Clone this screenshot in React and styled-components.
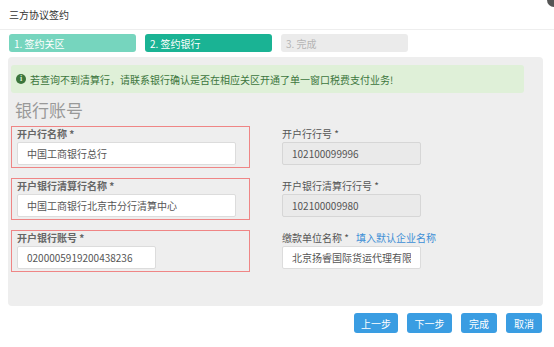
import React, { useState } from 'react';
import styled, { createGlobalStyle } from 'styled-components';

const GlobalStyle = createGlobalStyle`
  html, body {
    margin: 0;
    padding: 0;
    background: #fff;
  }
  body {
    font-family: 'Noto Sans CJK SC', 'Liberation Sans', sans-serif;
    font-size: 10px;
    color: #555;
  }
`;

const steps = [
  { text: '1. 签约关区', state: 'done' },
  { text: '2. 签约银行', state: 'active' },
  { text: '3. 完成', state: 'todo' },
];

const leftFields = [
  { label: '开户行名称', value: '中国工商银行总行', width: 219 },
  { label: '开户银行清算行名称', value: '中国工商银行北京市分行清算中心', width: 219 },
  { label: '开户银行账号', value: '0200005919200438236', width: 139 },
];

const rightFields = [
  { label: '开户行行号', value: '102100099996', disabled: true },
  { label: '开户银行清算行行号', value: '102100009980', disabled: true },
  { label: '缴款单位名称', value: '北京扬睿国际货运代理有限公司', link: '填入默认企业名称' },
];

export default function App() {
  const [values, setValues] = useState({});

  const setField = (key, v) => setValues((prev) => ({ ...prev, [key]: v }));

  return (
    <>
      <GlobalStyle />
      <Dialog>
        <Header>
          <Title>三方协议签约</Title>
          <Close />
        </Header>
        <Steps>
          {steps.map((s) => (
            <Step key={s.text} state={s.state}>{s.text}</Step>
          ))}
        </Steps>
        <Panel>
          <Alert>
            <InfoIcon>i</InfoIcon>
            若查询不到清算行，请联系银行确认是否在相应关区开通了单一窗口税费支付业务!
          </Alert>
          <Heading>银行账号</Heading>
          <FormGrid>
            {leftFields.map((f, i) => (
              <React.Fragment key={f.label}>
                <FieldBox $marked>
                  <Label $strong>{f.label} *</Label>
                  <Input
                    $width={f.width}
                    value={values['l' + i] ?? f.value}
                    onChange={(e) => setField('l' + i, e.target.value)}
                  />
                </FieldBox>
                <FieldBox>
                  <Label>
                    {rightFields[i].label} *
                    {rightFields[i].link && <FillLink>{rightFields[i].link}</FillLink>}
                  </Label>
                  <Input
                    $width={139}
                    disabled={rightFields[i].disabled}
                    value={values['r' + i] ?? rightFields[i].value}
                    onChange={(e) => setField('r' + i, e.target.value)}
                  />
                </FieldBox>
              </React.Fragment>
            ))}
          </FormGrid>
        </Panel>
        <Footer>
          <Button $w={44}>上一步</Button>
          <Button $w={45}>下一步</Button>
          <Button $w={36}>完成</Button>
          <Button $w={36}>取消</Button>
        </Footer>
      </Dialog>
    </>
  );
}

const Dialog = styled.div`
  position: relative;
  width: 554px;
  height: 347px;
  overflow: hidden;
`;

const Header = styled.div`
  height: 30px;
  display: flex;
  align-items: center;
  padding-left: 9px;
  border-bottom: 1px solid #eeeeee;
  box-sizing: border-box;
`;

const Title = styled.div`
  font-size: 10px;
  color: #333;
`;

const Close = styled.div`
  position: absolute;
  top: -7px;
  right: -7px;
  width: 14px;
  height: 14px;
  border-radius: 50%;
  background: #555;
`;

const Steps = styled.div`
  display: flex;
  gap: 9px;
  padding: 4px 0 0 9px;
`;

const stepColors = {
  done: { bg: '#76d5be', fg: '#fff' },
  active: { bg: '#1ab394', fg: '#fff' },
  todo: { bg: '#ebebeb', fg: '#b5b5b5' },
};

const Step = styled.div`
  width: 127px;
  height: 18px;
  box-sizing: border-box;
  display: flex;
  align-items: center;
  padding-left: 5px;
  border-radius: 3px;
  font-size: 10px;
  background: ${(p) => stepColors[p.state].bg};
  color: ${(p) => stepColors[p.state].fg};
`;

const Panel = styled.div`
  margin: 5px 11px 0 8px;
  height: 249px;
  box-sizing: border-box;
  padding: 8px 19px 0 3px;
  background: #eeeeee;
  border-radius: 4px;
`;

const Alert = styled.div`
  height: 28px;
  display: flex;
  align-items: center;
  padding-left: 5px;
  gap: 4px;
  background: #dff0d8;
  color: #3c763d;
  border-radius: 3px;
  font-size: 10px;
`;

const InfoIcon = styled.span`
  width: 10px;
  height: 10px;
  border-radius: 50%;
  background: #3c763d;
  color: #dff0d8;
  font-size: 8px;
  font-weight: 700;
  font-family: 'Liberation Serif', serif;
  display: flex;
  align-items: center;
  justify-content: center;
  line-height: 1;
`;

const Heading = styled.div`
  font-size: 17px;
  color: #999;
  line-height: 24px;
  height: 24px;
  padding: 5px 0 0 4px;
  margin-bottom: 4px;
`;

const FormGrid = styled.div`
  display: grid;
  grid-template-columns: 239px 1fr;
  column-gap: 31px;
  row-gap: 10px;
`;

const FieldBox = styled.div`
  height: 42px;
  box-sizing: border-box;
  border: 1px solid ${(p) => (p.$marked ? '#ef8585' : 'transparent')};
  padding: 0 0 2px ${(p) => (p.$marked ? '5px' : '0')};
  display: flex;
  flex-direction: column;
  justify-content: flex-end;
`;

const Label = styled.div`
  font-size: 10px;
  font-weight: ${(p) => (p.$strong ? 700 : 400)};
  color: ${(p) => (p.$strong ? '#666' : '#555')};
  line-height: 13px;
  margin-bottom: 2px;
  display: flex;
  gap: 7px;
`;

const FillLink = styled.a`
  color: #3d8fd6;
  font-weight: 400;
  cursor: pointer;
`;

const Input = styled.input`
  width: ${(p) => p.$width}px;
  height: 23px;
  box-sizing: border-box;
  border: 1px solid #dcdcdc;
  border-radius: 2px;
  padding: 0 9px;
  font-family: 'Noto Sans CJK SC', 'Liberation Sans', sans-serif;
  font-size: 10px;
  color: #555;
  background: #fff;
  outline: none;

  &:disabled {
    background: #eaeaea;
    border-color: #d6d6d6;
    color: #555;
  }
`;

const Footer = styled.div`
  display: flex;
  justify-content: flex-end;
  gap: 9px;
  padding: 7px 12px 0 0;
`;

const Button = styled.button`
  width: ${(p) => p.$w}px;
  height: 20px;
  border: none;
  border-radius: 3px;
  background: #3a9de2;
  color: #fff;
  font-family: 'Noto Sans CJK SC', 'Liberation Sans', sans-serif;
  font-size: 10px;
  padding: 0;
  cursor: pointer;
`;
